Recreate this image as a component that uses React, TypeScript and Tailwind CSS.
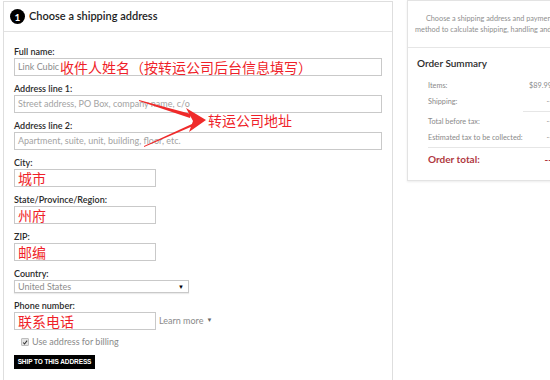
import React from 'react';

const red = 'text-[#ef1f2a]';
const cjk = { fontFamily: '"Noto Sans CJK SC", "Noto Sans", sans-serif' };

function Field({ label, width, children, h = 'h-[18px]' }: { label: string; width: string; children?: React.ReactNode; h?: string }) {
    return (
        <div>
            <div className="h-[12px] text-[9px] leading-[12px] font-semibold text-[#2a2a2a]">{label}</div>
            <div className={`${width} ${h} border border-[#c9c9c9] flex items-center px-[3px] overflow-hidden whitespace-nowrap`}>
                {children}
            </div>
        </div>
    );
}

function Row({ label, value }: { label: string; value: string }) {
    return (
        <div className="flex justify-between h-[16px] items-center text-[7.3px] text-[#8a8a8a] whitespace-nowrap">
            <span>{label}</span>
            <span>{value}</span>
        </div>
    );
}

export default function App() {
    return (
        <div className="relative w-[550px] h-[380px] overflow-hidden bg-white flex" style={{ fontFamily: 'Lato, "Noto Sans", sans-serif' }}>
            {/* left panel */}
            <div className="ml-[3px] w-[390px] h-[400px] border border-[#dedede] border-b-0 mt-[1px] shrink-0">
                <div className="h-[30px] flex items-center gap-[4px] pl-[6px] border-b border-[#e2e2e2]">
                    <div className="w-[15px] h-[15px] rounded-full bg-black text-white text-[10px] font-bold flex items-center justify-center leading-none">1</div>
                    <div className="text-[11px] font-semibold text-[#1e1e1e]">Choose a shipping address</div>
                </div>

                <div className="pl-[10px] pt-[14px] flex flex-col gap-[7px]">
                    <Field label="Full name:" width="w-[368px]">
                        <span className="text-[9px] text-[#8c8c8c] w-[42px]">Link Cubic</span>
                        <span className={`text-[14px] leading-none ${red}`} style={cjk}>收件人姓名（按转运公司后台信息填写）</span>
                    </Field>
                    <Field label="Address line 1:" width="w-[368px]">
                        <span className="text-[9px] text-[#a3a3a3]">Street address, PO Box, company name, c/o</span>
                    </Field>
                    <Field label="Address line 2:" width="w-[368px]">
                        <span className="text-[9px] text-[#a3a3a3]">Apartment, suite, unit, building, floor, etc.</span>
                    </Field>
                    <Field label="City:" width="w-[142px]">
                        <span className={`text-[14px] leading-none ${red}`} style={cjk}>城市</span>
                    </Field>
                    <Field label="State/Province/Region:" width="w-[142px]">
                        <span className={`text-[14px] leading-none ${red}`} style={cjk}>州府</span>
                    </Field>
                    <Field label="ZIP:" width="w-[142px]">
                        <span className={`text-[14px] leading-none ${red}`} style={cjk}>邮编</span>
                    </Field>
                    <Field label="Country:" width="w-[175px] justify-between shadow-[0_1px_1px_rgba(0,0,0,0.08)]" h="h-[13px]">
                        <span className="text-[9px] text-[#8c8c8c]">United States</span>
                        <span className="text-[6px] text-black pr-[1px]">▼</span>
                    </Field>
                    <div>
                        <div className="h-[12px] text-[9px] leading-[12px] font-semibold text-[#2a2a2a]">Phone number:</div>
                        <div className="flex items-center gap-[3px]">
                            <div className="w-[142px] h-[18px] border border-[#c9c9c9] flex items-center px-[3px]">
                                <span className={`text-[14px] leading-none ${red}`} style={cjk}>联系电话</span>
                            </div>
                            <span className="text-[9px] text-[#8a8a8a]">Learn more</span>
                            <span className="text-[6px] text-[#666] -mt-[3px]">▼</span>
                        </div>
                    </div>
                    <div className="flex items-center gap-[3px] pl-[7px] -mt-[2px] h-[14px]">
                        <div className="w-[8px] h-[8px] rounded-[1px] bg-[#e4e4e4] border border-[#bdbdbd] flex items-center justify-center">
                            <svg viewBox="0 0 10 10" className="w-[7px] h-[7px]"><path d="M2 5 L4.2 7.5 L8.5 2" fill="none" stroke="#333" strokeWidth="1.8" /></svg>
                        </div>
                        <span className="text-[9px] text-[#8a8a8a]">Use address for billing</span>
                    </div>
                    <div className="-mt-[1px]">
                        <div className="w-[81px] h-[14px] bg-black text-white text-[6.5px] font-bold flex items-center justify-center tracking-[-0.1px]" style={{ fontFamily: '"Liberation Sans", Arial, sans-serif' }}>SHIP TO THIS ADDRESS</div>
                    </div>
                </div>
            </div>

            {/* right column */}
            <div className="ml-[14px] w-[166px] h-[181px] shrink-0 border border-[#e3e3e3] shadow-[0_1px_2px_rgba(0,0,0,0.08)]">
                <div className="h-[47px] border-b border-[#e6e6e6] flex flex-col justify-center items-center text-center text-[7.3px] leading-[11px] text-[#8f8f8f]">
                    <div className="whitespace-nowrap">Choose a shipping address and payment</div>
                    <div className="whitespace-nowrap">method to calculate shipping, handling and tax.</div>
                </div>
                <div className="pl-[9px] pt-[8px] text-[10px] font-semibold text-[#2b2b2b]">Order Summary</div>
                <div className="pl-[20px] pr-[20px] pt-[7px]">
                    <Row label="Items:" value="$89.99" />
                    <Row label="Shipping:" value="--" />
                    <div className="h-px bg-[#e6e6e6] ml-[95px] mt-[1px]" />
                    <div className="mt-[2px]" />
                    <Row label="Total before tax:" value="--" />
                    <Row label="Estimated tax to be collected:" value="--" />
                    <div className="h-px bg-[#e6e6e6] mt-[1px]" />
                    <div className="flex justify-between items-center h-[22px] text-[10px] font-bold text-[#b0383f]">
                        <span>Order total:</span>
                        <span>--</span>
                    </div>
                </div>
            </div>

            {/* annotation */}
            <div className={`absolute left-[208px] top-[113px] text-[14px] leading-none ${red}`} style={cjk}>转运公司地址</div>
            <svg className="absolute left-0 top-0 pointer-events-none" width="550" height="380">
                <polygon points="139,100 191,114 190,118 139,101" fill="#ef2a2a" />
                <polygon points="186,108 206,120 189,132 193,121" fill="#ef2a2a" />
                <polygon points="144,146 192,124 193,126 144,147" fill="#ef2a2a" />
            </svg>
        </div>
    );
}
